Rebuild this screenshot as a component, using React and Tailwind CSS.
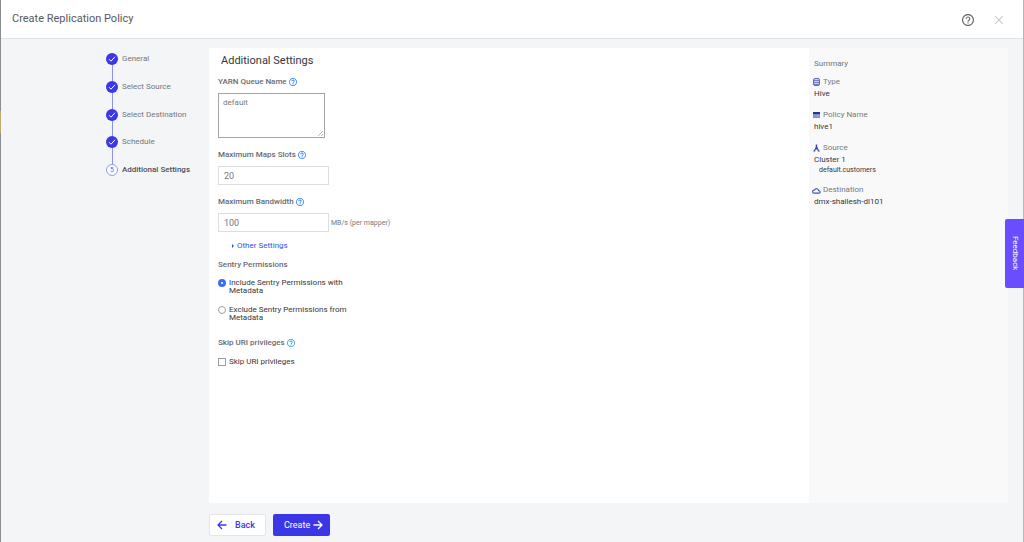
import { useState } from 'react';

const steps = ['General', 'Select Source', 'Select Destination', 'Schedule', 'Additional Settings'];

const HelpIcon = ({ className }) => (
    <svg viewBox="2 2 20 20" className={`shrink-0 ${className}`} fill="currentColor" aria-hidden="true">
        <path d="M11 18h2v-2h-2v2zm1-16C6.48 2 2 6.48 2 12s4.480 10 10 10 10-4.480 10-10S17.520 2 12 2zm0 18c-4.410 0-8-3.590-8-8s3.590-8 8-8 8 3.590 8 8-3.590 8-8 8zm0-14c-2.210 0-4 1.790-4 4h2c0-1.100.9-2 2-2s2 .9 2 2c0 2-3 1.750-3 5h2c0-2.250 3-2.500 3-5 0-2.210-1.790-4-4-4z" />
    </svg>
);

const TypeIcon = () => (
    <svg viewBox="0 0 7 8" className="h-2 w-[7px]" fill="none" stroke="#5f6bb4">
        <rect x=".5" y=".5" width="6" height="7" rx="1.500" fill="#c9d0ee" />
        <path d="M1 2.500h5M1 4.500h5M1 6.500h5" strokeWidth=".8" />
    </svg>
);

const PolicyIcon = () => (
    <svg viewBox="0 0 7 6" className="h-1.5 w-[7px]">
        <rect width="7" height="6" rx=".5" fill="#7b89cd" />
        <rect width="7" height="2" fill="#29347e" />
        <path d="M1 3.500h1.500M3.500 3.500h2.500M1 4.800h1.500M3.500 4.800h2.500" stroke="#b9c4ed" strokeWidth=".5" />
    </svg>
);

const SourceIcon = () => (
    <svg viewBox="0 0 7 8" className="h-2 w-[7px]" fill="none" stroke="#3f4a98">
        <path d="M3.500 .5v4" strokeWidth="1.500" />
        <path d="M3.500 3L1.300 7M3.500 3L5.700 7M2.400 4.800h2.200" strokeWidth="1.200" />
        <path d="M.4 7h1.800M4.800 7h1.800" strokeWidth="1.200" />
    </svg>
);

const CloudIcon = () => (
    <svg viewBox="0 0 24 18" className="-ml-px h-[7px] w-[9px] shrink-0" fill="none" stroke="#4653a6" strokeWidth="3">
        <path d="M5.500 16a4 4 0 0 1 0-8L7 7.500a5.500 5.500 0 0 1 10.500 1.500l1.500.5a3.300 3.300 0 0 1 0 6.500z" />
    </svg>
);

const Arrow = ({ back }) => (
    <svg viewBox="0 0 10 10" className="size-2.5" fill="none" stroke="currentColor" strokeWidth="1.300">
        {back ? <path d="M9.500 5H1M5 1L1 5l4 4" /> : <path d="M.5 5H9M5 1l4 4-4 4" />}
    </svg>
);

const FieldLabel = ({ htmlFor, helpColor = 'text-[#2f80ff]', className, children }) => (
    <div className={`flex items-center gap-0.5 text-[8px] leading-3 font-medium text-[#676b71] ${className}`}>
        <label htmlFor={htmlFor}>{children}</label>
        <HelpIcon className={`size-2 ${helpColor}`} />
    </div>
);

const SummaryItem = ({ icon, title, value, children }) => (
    <div>
        <dt className="-ml-px flex h-3 items-center gap-px text-[#77797d]">
            <span className="flex w-[9px]">{icon}</span>
            {title}
        </dt>
        <dd className="text-[#333740]">{value}</dd>
        {children}
    </div>
);

const inputClass = 'block h-[19px] w-[111px] border border-[#dcdee0] bg-white px-[5px] text-[9px] text-[#77797d] outline-none';

const App = () => {
    const [sentry, setSentry] = useState('include');
    const [skipUri, setSkipUri] = useState(false);

    return (
        <div className="relative flex min-h-screen flex-col border-x border-l-[#8b8d90] border-r-[#b5b8bb] bg-[#f3f5f7] font-['Roboto',sans-serif] text-[8px] leading-3 text-[#333740]">
            {/* Sliver of the page behind the dialog */}
            <div className="absolute top-[111px] -left-px h-[22px] w-px bg-[#b9ad72]" />

            <header className="flex h-[39px] shrink-0 items-center justify-between border-b border-[#dfe2e5] bg-white pr-5 pl-[11px]">
                <h1 className="text-[11px] leading-4 text-[#55595f]">Create Replication Policy</h1>
                <div className="flex items-center gap-[21px] pt-px">
                    <button type="button" aria-label="Help">
                        <HelpIcon className="size-3 text-[#65686c]" />
                    </button>
                    <button type="button" aria-label="Close">
                        <svg viewBox="0 0 8 8" className="size-2" stroke="#c7ccd4" strokeWidth="1.200">
                            <path d="M0 0l8 8M8 0L0 8" />
                        </svg>
                    </button>
                </div>
            </header>

            <div className="flex flex-1 pt-[9px] pr-[15px]">
                <nav className="w-52 shrink-0 pt-[5px] pl-[105px]">
                    <ol className="relative flex h-[123px] flex-col justify-between">
                        <div className="absolute top-1 bottom-3 left-[6px] w-px bg-[#8f90f0]" />
                        {steps.map((step, i) => (
                            <li key={step} className="relative flex items-center gap-1">
                                {i < 4 ? (
                                    <span className="flex size-3 items-center justify-center rounded-full bg-[#3b37e6]">
                                        <svg viewBox="0 0 8 8" className="size-2" fill="none" stroke="white" strokeWidth="1">
                                            <path d="M1 4.200l2 2 4-4.400" />
                                        </svg>
                                    </span>
                                ) : (
                                    <span className="flex size-3 items-center justify-center rounded-full border border-[#83a2fa] bg-white text-[7px] text-[#4a6cf0]">
                                        5
                                    </span>
                                )}
                                <span className={i < 4 ? 'text-[#73777c]' : 'font-medium text-[#4b4f57]'}>{step}</span>
                            </li>
                        ))}
                    </ol>
                </nav>

                <main className="flex-1 rounded-l-xs bg-white pt-1.5 pl-[9px]">
                    <h2 className="pl-[3px] text-[11px] leading-[14px]">Additional Settings</h2>

                    <FieldLabel htmlFor="queue" className="mt-2 mb-[5px]">YARN Queue Name</FieldLabel>
                    <div className="relative w-fit">
                        <textarea
                            id="queue"
                            defaultValue="default"
                            className="block h-[45px] w-[107px] resize-none border border-[#a5a5a5] bg-white px-1 py-[3px] text-[8px] leading-3 text-[#77797d] outline-none"
                        />
                        <svg viewBox="0 0 5 5" className="pointer-events-none absolute right-0.5 bottom-0.5 size-[5px]" stroke="#9b9b9b" strokeWidth=".7">
                            <path d="M0 5l5-5M3 5l2-2" />
                        </svg>
                    </div>

                    <FieldLabel htmlFor="slots" className="mt-[11px] mb-[5px]">Maximum Maps Slots</FieldLabel>
                    <input id="slots" type="text" defaultValue="20" className={inputClass} />

                    <FieldLabel htmlFor="bandwidth" className="mt-[11px] mb-[5px]">Maximum Bandwidth</FieldLabel>
                    <div className="flex items-center gap-0.5">
                        <input id="bandwidth" type="text" defaultValue="100" className={inputClass} />
                        <span className="text-[7px] text-[#77797d]">MB/s (per mapper)</span>
                    </div>

                    <button type="button" className="mt-2 ml-3.5 flex items-center gap-[3px] text-[#3452e8]">
                        <svg viewBox="0 0 2 4" className="h-1 w-0.5" fill="currentColor">
                            <path d="M0 0l2 2-2 2z" />
                        </svg>
                        Other Settings
                    </button>

                    <fieldset>
                        <legend className="pt-[7px] font-medium text-[#676b71]">Sentry Permissions</legend>
                        <div className="mt-2 flex flex-col gap-[11px] leading-2">
                            {[
                                ['include', 'Include Sentry Permissions with Metadata'],
                                ['exclude', 'Exclude Sentry Permissions from Metadata'],
                            ].map(([value, text]) => (
                                <label key={value} className="flex w-36 items-start gap-[3px]">
                                    <input
                                        type="radio"
                                        name="sentry"
                                        checked={sentry === value}
                                        onChange={() => setSentry(value)}
                                        className="size-2 shrink-0 appearance-none rounded-full border border-[#9c9ea1] bg-white checked:border-3 checked:border-[#3b6cf6]"
                                    />
                                    {text}
                                </label>
                            ))}
                        </div>
                    </fieldset>

                    <FieldLabel htmlFor="skip" helpColor="text-[#2da0d8]" className="mt-[15px]">Skip URI privileges</FieldLabel>
                    <label className="mt-[7px] flex w-fit items-center gap-[3px]">
                        <input
                            id="skip"
                            type="checkbox"
                            checked={skipUri}
                            onChange={(e) => setSkipUri(e.target.checked)}
                            className="size-2 appearance-none border border-[#9c9ea1] bg-white checked:bg-[#3b6cf6]"
                        />
                        Skip URI privileges
                    </label>
                </main>

                <aside className="w-[199px] shrink-0 bg-[#f9f9f9] pt-2.5 pl-[5px]">
                    <h3 className="text-[#6f7379]">Summary</h3>
                    <dl className="mt-1.5 flex flex-col gap-[9px]">
                        <SummaryItem icon={<TypeIcon />} title="Type" value="Hive" />
                        <SummaryItem icon={<PolicyIcon />} title="Policy Name" value="hive1" />
                        <SummaryItem icon={<SourceIcon />} title="Source" value="Cluster 1">
                            <dd className="pl-[5px] text-[7px] leading-[9px]">default.customers</dd>
                        </SummaryItem>
                        <SummaryItem icon={<CloudIcon />} title="Destination" value="dmx-shailesh-dl101" />
                    </dl>
                </aside>
            </div>

            <footer className="flex h-[39px] shrink-0 items-start gap-[7px] pt-[11px] pl-52 text-[9px]">
                <button type="button" className="flex h-[22px] w-[57px] items-center gap-2 rounded-xs border border-[#e3e5e9] bg-white pl-[7px] font-medium text-[#3b37e6]">
                    <Arrow back />
                    Back
                </button>
                <button type="button" className="flex h-[22px] w-[57px] items-center gap-[3px] rounded-xs bg-[#3b37e6] pl-[11px] text-white">
                    Create
                    <Arrow />
                </button>
            </footer>

            <button type="button" className="fixed top-[219px] right-0 flex h-[69px] w-[19px] items-center justify-center rounded-l-xs bg-[#6a4dff] text-[8px] text-white [writing-mode:vertical-rl]">
                Feedback
            </button>
        </div>
    );
};

export default App;
